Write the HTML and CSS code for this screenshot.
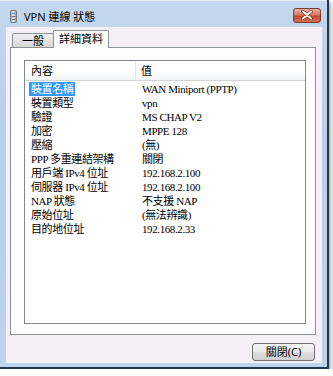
FILE: index.html
```html
<!DOCTYPE html>
<html>
  <head>
    <meta charset="utf-8">
    <title>VPN 連線 狀態</title>
    <link rel="stylesheet" href="styles.css">
  </head>
  <body>
    <div class="window">
      <div class="titlebar">
        <svg class="app-icon" width="7" height="13" viewBox="0 0 7 13">
          <defs>
            <linearGradient id="ic" x1="0" y1="0" x2="1" y2="0">
              <stop offset="0" stop-color="#9aa3ad"/>
              <stop offset="0.5" stop-color="#eef1f4"/>
              <stop offset="1" stop-color="#7d8791"/>
            </linearGradient>
          </defs>
          <rect x="0.5" y="0.5" width="6" height="12" rx="1" fill="url(#ic)" stroke="#6f7983"/>
          <rect x="2" y="3" width="3" height="1" fill="#4d87c7"/>
          <rect x="2" y="6" width="3" height="1" fill="#5a6570"/>
          <rect x="2" y="9" width="3" height="1" fill="#5a6570"/>
        </svg>
        <span class="title">VPN 連線 狀態</span>
        <div class="close-btn">
          <svg width="12" height="10" viewBox="0 0 12 10">
            <path d="M2 1.5 L10 8.5 M10 1.5 L2 8.5" stroke="#7a2a1c" stroke-width="3.4" stroke-linecap="round"/>
            <path d="M2 1.5 L10 8.5 M10 1.5 L2 8.5" stroke="#fff" stroke-width="2" stroke-linecap="round"/>
          </svg>
        </div>
      </div>

      <div class="client">
        <div class="tabs">
          <div class="tab">一般</div>
          <div class="tab active">詳細資料</div>
        </div>

        <div class="pane">
          <div class="listview">
            <div class="lv-header">
              <div class="col-name">內容</div>
              <div class="col-value">值</div>
            </div>
            <div class="lv-row">
              <div class="col-name"><span class="selected">裝置名稱</span></div>
              <div class="col-value">WAN Miniport (PPTP)</div>
            </div>
            <div class="lv-row">
              <div class="col-name"><span>裝置類型</span></div>
              <div class="col-value">vpn</div>
            </div>
            <div class="lv-row">
              <div class="col-name"><span>驗證</span></div>
              <div class="col-value">MS CHAP V2</div>
            </div>
            <div class="lv-row">
              <div class="col-name"><span>加密</span></div>
              <div class="col-value">MPPE 128</div>
            </div>
            <div class="lv-row">
              <div class="col-name"><span>壓縮</span></div>
              <div class="col-value">(無)</div>
            </div>
            <div class="lv-row">
              <div class="col-name"><span>PPP 多重連結架構</span></div>
              <div class="col-value">關閉</div>
            </div>
            <div class="lv-row">
              <div class="col-name"><span>用戶端 IPv4 位址</span></div>
              <div class="col-value">192.168.2.100</div>
            </div>
            <div class="lv-row">
              <div class="col-name"><span>伺服器 IPv4 位址</span></div>
              <div class="col-value">192.168.2.100</div>
            </div>
            <div class="lv-row">
              <div class="col-name"><span>NAP 狀態</span></div>
              <div class="col-value">不支援 NAP</div>
            </div>
            <div class="lv-row">
              <div class="col-name"><span>原始位址</span></div>
              <div class="col-value">(無法辨識)</div>
            </div>
            <div class="lv-row">
              <div class="col-name"><span>目的地位址</span></div>
              <div class="col-value">192.168.2.33</div>
            </div>
          </div>
        </div>

        <div class="buttons">
          <button class="btn">關閉(C)</button>
        </div>
      </div>
    </div>
  </body>
</html>
```

FILE: styles.css
```css
* {
    box-sizing: border-box;
}
body {
    margin: 0;
    background: #fff;
    font-family: "Noto Sans", "Noto Sans CJK TC", sans-serif;
    font-size: 11px;
    color: #000;
}
.window {
    width: 329px;
    height: 369px;
    padding: 0 5px 4px 6px;
    background: linear-gradient(#c3d7ee, #b9d0ea 40%, #bdd4ec);
    border-right: 2px solid #1f3a4c;
    border-bottom: 2px solid #1f3a4c;
    box-shadow: 2px 2px 4px rgba(0, 0, 0, 0.35);
    display: flex;
    flex-direction: column;
}
.titlebar {
    height: 27px;
    margin: 0 -5px 0 -6px;
    padding: 5px 6px 0 10px;
    display: flex;
    align-items: center;
    border-top: 1px solid #e6eef8;
}
.app-icon { flex: none; }
.title {
    margin-left: 7px;
    flex: 1;
    line-height: 22px;
}
.close-btn {
    width: 28px;
    height: 15px;
    margin-top: -3px;
    border: 1px solid #7b3b2e;
    border-radius: 3px;
    background: linear-gradient(#e8b0a2, #d67a64 45%, #c14a2e 55%, #d0745a);
    display: flex;
    align-items: center;
    justify-content: center;
}

.client {
    flex: 1;
    background: #f4f0f5;
    padding: 3px 7px 0 4px;
}
.tabs {
    height: 17px;
    display: flex;
    align-items: flex-end;
    padding-left: 2px;
}
.tab {
    height: 14px;
    width: 42px;
    border: 1px solid #8d9198;
    border-bottom: none;
    border-radius: 2px 2px 0 0;
    background: linear-gradient(#f2f2f2, #e3e3e3 50%, #d7d7d7);
    text-align: center;
    line-height: 13px;
}
.tab.active {
    position: relative;
    z-index: 1;
    height: 18px;
    width: 56px;
    margin-left: -1px;
    margin-bottom: -1px;
    background: #fdfdfd;
    line-height: 16px;
}

.pane {
    width: 306px;
    height: 288px;
    border: 1px solid #8e9196;
    background: #fdfdfd;
    padding: 12px 9px 10px 13px;
}
.listview {
    width: 282px;
    height: 264px;
    border: 1px solid #828790;
    background: #fff;
    font-family: "Liberation Serif", "Noto Sans CJK TC", serif;
    letter-spacing: -0.4px;
}
.lv-header {
    height: 20px;
    display: flex;
    border-bottom: 1px solid #d5d5d5;
    background: linear-gradient(#fff, #fff 50%, #f3f4f6);
    font-family: "Noto Sans", "Noto Sans CJK TC", sans-serif;
    letter-spacing: 0;
    margin-bottom: 1px;
}
.lv-header .col-name {
    width: 111px;
    padding-left: 6px;
    border-right: 1px solid #e2e6ec;
    line-height: 19px;
}
.lv-header .col-value {
    padding-left: 5px;
    line-height: 19px;
}
.lv-row {
    height: 14px;
    display: flex;
    line-height: 14px;
}
.lv-row .col-name {
    width: 111px;
    padding-left: 4px;
    white-space: nowrap;
}
.lv-row .col-name span {
    padding: 0 2px;
    display: inline-block;
    height: 14px;
}
.lv-row .col-name span.selected {
    background: #3399ff;
    color: #fff;
}
.lv-row .col-value {
    padding-left: 6px;
    white-space: nowrap;
}

.buttons {
    display: flex;
    justify-content: flex-end;
    padding-top: 8px;
}
.btn {
    width: 63px;
    height: 18px;
    padding: 0;
    border: 1px solid #707070;
    border-radius: 3px;
    background: linear-gradient(#f3f3f3, #ebebeb 48%, #dddddd 52%, #cfcfcf);
    font-family: "Noto Sans", "Noto Sans CJK TC", sans-serif;
    font-size: 11px;
    color: #000;
    line-height: 16px;
}
```
